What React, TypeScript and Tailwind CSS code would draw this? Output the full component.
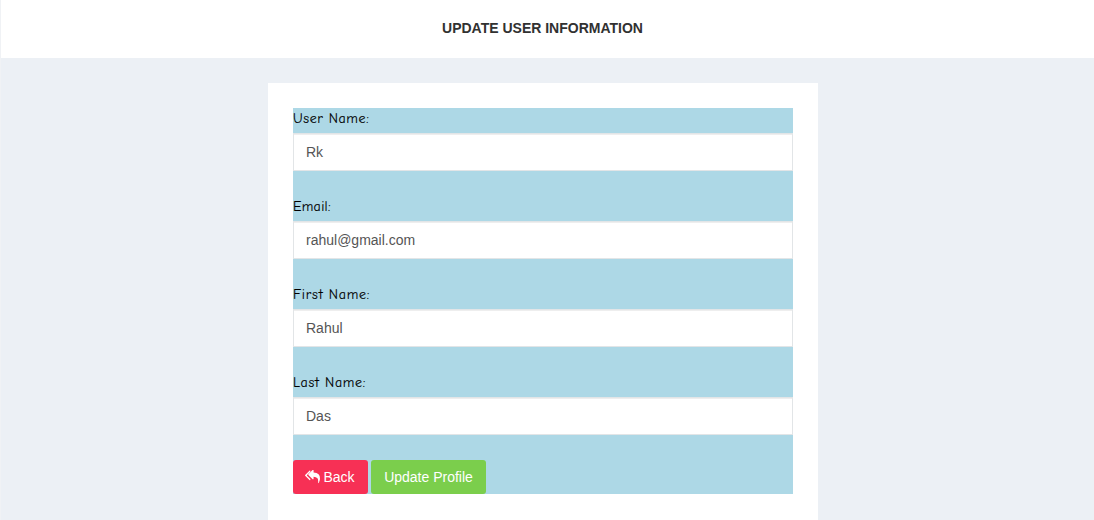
import React from "react";

const fields = [
  { id: "username", label: "User Name:", value: "Rk", tracking: "tracking-[0.6px]" },
  { id: "email", label: "Email:", value: "rahul@gmail.com", tracking: "tracking-[0.3px]" },
  { id: "first", label: "First Name:", value: "Rahul", tracking: "tracking-[0.75px]" },
  { id: "last", label: "Last Name:", value: "Das", tracking: "tracking-[0.7px]" },
];

function ReplyAllIcon() {
  return (
    <svg viewBox="0 0 1792 1792" fill="currentColor" className="size-[15px]" aria-hidden="true">
      <path d="M640 1082v70q0 42-39 59-13 5-25 5-27 0-45-19l-512-512q-19-19-19-45t19-45l512-512q29-31 70-14 39 17 39 59v69l-397 398q-19 19-19 45t19 45zm1152-58q0 58-17 133.5t-38.5 138-48 125-40.5 90.5l-20 40q-8 17-28 17-6 0-9-1-25-8-23-34 43-400-106-565-64-71-170.5-110.5t-267.5-52.5v251q0 42-39 59-13 5-25 5-27 0-45-19l-512-512q-19-19-19-45t19-45l512-512q29-31 70-14 39 17 39 59v262q411 28 599 221 169 173 169 509z" />
    </svg>
  );
}

export default function App() {
  return (
    <div className="flex h-screen flex-col overflow-hidden border-l border-[#f0f2f5] bg-[#ecf0f5] font-['Liberation_Sans',Arial,sans-serif] text-sm">
      <header className="flex h-[58px] shrink-0 justify-center bg-white pr-[10px] pt-[18px]">
        <h1 className="text-[14px] font-bold leading-5 text-[#313131]">UPDATE USER INFORMATION</h1>
      </header>
      <main className="flex min-h-0 flex-1 justify-center pr-[9px] pt-[25px]">
        <section className="w-[550px] bg-white p-[25px]">
          <form className="bg-[#add8e6]" onSubmit={(e) => e.preventDefault()}>
            {fields.map((f) => (
              <div key={f.id} className="mb-[25px]">
                <label
                  htmlFor={f.id}
                  className={`block h-[25px] whitespace-nowrap font-['Comic_Sans_MS','Comic_Neue',Inter,sans-serif] text-[14px] leading-[21px] text-black [-webkit-text-stroke:0.1px_black] ${f.tracking}`}
                >
                  {f.label}
                </label>
                <input
                  id={f.id}
                  type="text"
                  defaultValue={f.value}
                  className="block h-[38px] w-full border border-[#e2e5e7] bg-white px-3 text-sm text-[#555555] shadow-[inset_0_1px_0_#eeeeee] outline-none"
                />
              </div>
            ))}
            <div className="flex gap-[3px]">
              <button type="button" className="flex h-[34px] w-[75px] items-center justify-center gap-[3px] rounded-[3px] bg-[#f73055] pr-px text-white">
                <ReplyAllIcon />
                <span>Back</span>
              </button>
              <button type="submit" className="h-[34px] w-[115px] rounded-[3px] bg-[#7bce4c] text-white">
                Update Profile
              </button>
            </div>
          </form>
        </section>
      </main>
    </div>
  );
}
